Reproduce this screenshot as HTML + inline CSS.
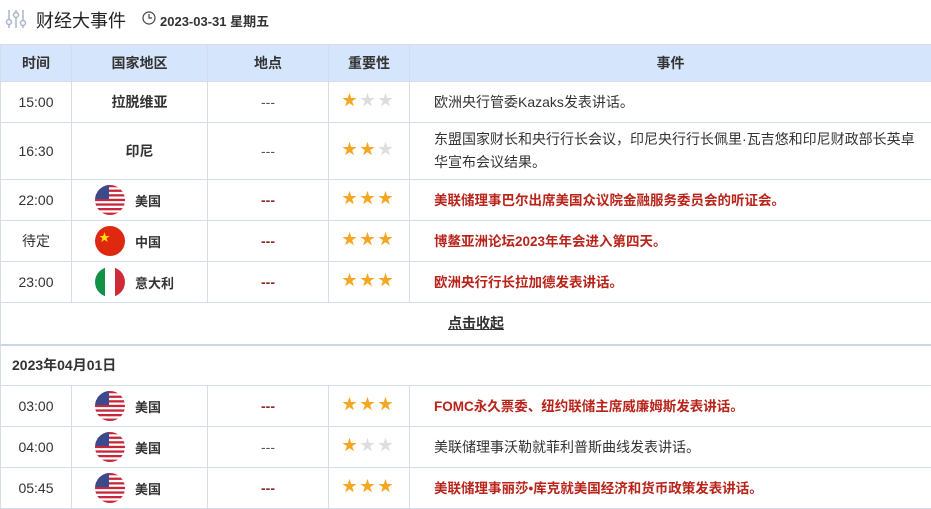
<!DOCTYPE html>
<html><head><meta charset="utf-8"><style>
*{margin:0;padding:0;box-sizing:border-box}
body{width:931px;height:508px;overflow:hidden;background:#fff;font-family:"Liberation Sans","Noto Sans CJK SC",sans-serif;color:#333;font-size:14px}
.top{height:44px;position:relative}
.top .t{position:absolute;left:36px;top:7px;font-size:18px;color:#222}
.top .d{position:absolute;left:160px;top:11px;font-size:13px;font-weight:bold;color:#333}
table{border-collapse:collapse;table-layout:fixed;width:932px;position:absolute;top:44px;left:0}
td,th{border:1px solid #d5dde9;text-align:center;vertical-align:middle}
th{background:#d5e5fb;height:37px;font-weight:bold;font-size:14px;color:#333}
td{height:41px}
td.ev{text-align:left;padding-left:24px;padding-right:10px;line-height:23px;font-size:14px}
td.ev.r{font-size:13.5px}
.r{color:#b8231a;font-weight:bold}
.dash{color:#555}
.dr{color:#8b2a1e;font-weight:bold}
.c{display:flex;align-items:center;padding-left:23px;font-weight:bold;font-size:13px}
.f{width:30px;height:30px;border-radius:50%;overflow:hidden;margin-right:10px;flex:none}
.st{color:#f5a623;font-size:15px;letter-spacing:3px;position:relative;top:-3px}
.g{color:#ddd}
</style></head><body>
<div class="top">
<svg style="position:absolute;left:5px;top:9px" width="22" height="20" viewBox="0 0 22 20" fill="none" stroke="#aab6c8" stroke-width="1.5"><line x1="4" y1="1" x2="4" y2="19"/><circle cx="4" cy="13" r="2.5" fill="#fff"/><line x1="11" y1="1" x2="11" y2="19"/><circle cx="11" cy="6" r="2.5" fill="#fff"/><line x1="18" y1="1" x2="18" y2="19"/><circle cx="18" cy="14" r="2.5" fill="#fff"/></svg>
<div class="t">财经大事件</div>
<svg style="position:absolute;left:142px;top:11px" width="14" height="14" viewBox="0 0 14 14" fill="none" stroke="#444" stroke-width="1.2"><circle cx="7" cy="7" r="6"/><path d="M7 3v4h3"/></svg>
<div class="d">2023-03-31 星期五</div>
</div>
<table>
<colgroup><col style="width:71px"><col style="width:136px"><col style="width:121px"><col style="width:81px"><col></colgroup>
<tr><th>时间</th><th>国家地区</th><th>地点</th><th>重要性</th><th>事件</th></tr>
<tr><td>15:00</td><td><b>拉脱维亚</b></td><td class="dash">---</td><td><span class="st">★<span class="g">★★</span></span></td><td class="ev">欧洲央行管委Kazaks发表讲话。</td></tr>
<tr><td style="height:57px">16:30</td><td><b>印尼</b></td><td class="dash">---</td><td><span class="st">★★<span class="g">★</span></span></td><td class="ev">东盟国家财长和央行行长会议，印尼央行行长佩里·瓦吉悠和印尼财政部长英卓<br>华宣布会议结果。</td></tr>
<tr><td>22:00</td><td><div class="c"><svg class="f" viewBox="0 0 30 30"><rect width="30" height="30" fill="#fff"/><g fill="#c8263a"><rect y="0" width="30" height="2.3"/><rect y="4.6" width="30" height="2.3"/><rect y="9.2" width="30" height="2.3"/><rect y="13.8" width="30" height="2.3"/><rect y="18.4" width="30" height="2.3"/><rect y="23" width="30" height="2.3"/><rect y="27.6" width="30" height="2.4"/></g><rect width="14" height="14" fill="#3b4a8c"/></svg>美国</div></td><td class="dr">---</td><td><span class="st">★★★</span></td><td class="ev r">美联储理事巴尔出席美国众议院金融服务委员会的听证会。</td></tr>
<tr><td>待定</td><td><div class="c"><svg class="f" viewBox="0 0 30 30"><rect width="30" height="30" fill="#de2910"/><text x="4" y="15" fill="#ffde00" font-size="11">★</text></svg>中国</div></td><td class="dr">---</td><td><span class="st">★★★</span></td><td class="ev r">博鳌亚洲论坛2023年年会进入第四天。</td></tr>
<tr><td>23:00</td><td><div class="c"><svg class="f" viewBox="0 0 30 30"><rect width="10" height="30" fill="#129247"/><rect x="10" width="10" height="30" fill="#fff"/><rect x="20" width="10" height="30" fill="#cf2b37"/></svg>意大利</div></td><td class="dr">---</td><td><span class="st">★★★</span></td><td class="ev r">欧洲央行行长拉加德发表讲话。</td></tr>
<tr><td colspan="5" style="height:42px;border-bottom:2px solid #c9d6ea"><b style="text-decoration:underline;color:#333;position:relative;left:10px">点击收起</b></td></tr>
<tr><td colspan="5" style="text-align:left;padding-left:11px;font-weight:bold">2023年04月01日</td></tr>
<tr><td>03:00</td><td><div class="c"><svg class="f" viewBox="0 0 30 30"><rect width="30" height="30" fill="#fff"/><g fill="#c8263a"><rect y="0" width="30" height="2.3"/><rect y="4.6" width="30" height="2.3"/><rect y="9.2" width="30" height="2.3"/><rect y="13.8" width="30" height="2.3"/><rect y="18.4" width="30" height="2.3"/><rect y="23" width="30" height="2.3"/><rect y="27.6" width="30" height="2.4"/></g><rect width="14" height="14" fill="#3b4a8c"/></svg>美国</div></td><td class="dr">---</td><td><span class="st">★★★</span></td><td class="ev r">FOMC永久票委、纽约联储主席威廉姆斯发表讲话。</td></tr>
<tr><td>04:00</td><td><div class="c"><svg class="f" viewBox="0 0 30 30"><rect width="30" height="30" fill="#fff"/><g fill="#c8263a"><rect y="0" width="30" height="2.3"/><rect y="4.6" width="30" height="2.3"/><rect y="9.2" width="30" height="2.3"/><rect y="13.8" width="30" height="2.3"/><rect y="18.4" width="30" height="2.3"/><rect y="23" width="30" height="2.3"/><rect y="27.6" width="30" height="2.4"/></g><rect width="14" height="14" fill="#3b4a8c"/></svg>美国</div></td><td class="dash">---</td><td><span class="st">★<span class="g">★★</span></span></td><td class="ev">美联储理事沃勒就菲利普斯曲线发表讲话。</td></tr>
<tr><td>05:45</td><td><div class="c"><svg class="f" viewBox="0 0 30 30"><rect width="30" height="30" fill="#fff"/><g fill="#c8263a"><rect y="0" width="30" height="2.3"/><rect y="4.6" width="30" height="2.3"/><rect y="9.2" width="30" height="2.3"/><rect y="13.8" width="30" height="2.3"/><rect y="18.4" width="30" height="2.3"/><rect y="23" width="30" height="2.3"/><rect y="27.6" width="30" height="2.4"/></g><rect width="14" height="14" fill="#3b4a8c"/></svg>美国</div></td><td class="dr">---</td><td><span class="st">★★★</span></td><td class="ev r">美联储理事丽莎•库克就美国经济和货币政策发表讲话。</td></tr>
</table>
</body></html>
